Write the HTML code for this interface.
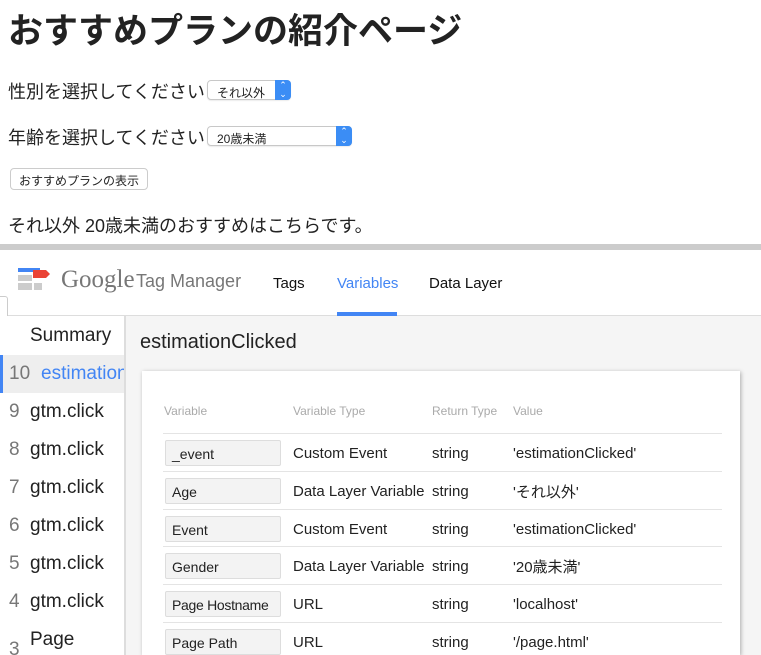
<!DOCTYPE html>
<html style="overflow:hidden;width:761px;height:655px"><head><meta charset="utf-8"><style>
*{margin:0;padding:0;box-sizing:border-box}
body{width:761px;height:655px;overflow:hidden;background:#fff;font-family:"Liberation Sans","Noto Sans CJK JP",sans-serif;position:relative;color:#222}
.a{position:absolute;white-space:nowrap}
.sel{position:absolute;height:20px;border:1px solid #c8c8c8;border-radius:4px;background:#fff;font-size:12px;padding:3px 9px;box-shadow:0 1px 1px rgba(0,0,0,.08);white-space:nowrap}
.sel i{position:absolute;right:-1px;top:-1px;width:16px;height:20px;background:#3b8df5;border-radius:0 4px 4px 0;color:#fff;font-style:normal;font-size:9px;text-align:center;line-height:9px;padding-top:1px}
.side{position:absolute;left:0;top:316px;width:126px;height:339px;border-right:2px solid #ddd;background:#fff;overflow:hidden}
.it{position:absolute;left:0;width:124px;height:38px;font-size:19px;line-height:38px;white-space:nowrap;overflow:hidden}
.it b{font-weight:normal;color:#777;display:inline-block;width:30px;padding-left:9px}
.row{position:absolute;left:163px;width:559px;height:38px;border-top:1px solid #e4e4e4;font-size:15px;white-space:nowrap}
.row span{position:absolute;top:11px}
.box{position:absolute;left:2px;top:6px;width:116px;height:26px;background:#f3f3f3;border:1px solid #ddd;border-radius:2px;padding:5px 6px;font-size:14px;white-space:nowrap;overflow:hidden}
</style></head><body>
<div class="a" style="left:8px;top:3px;font-size:35px;font-weight:bold">おすすめプランの紹介ページ</div>
<div class="a" style="left:8px;top:78px;font-size:18px">性別を選択してください</div>
<div class="sel" style="left:207px;top:80px;width:84px">それ以外<i>⌃<br>⌄</i></div>
<div class="a" style="left:8px;top:124px;font-size:18px">年齢を選択してください</div>
<div class="sel" style="left:207px;top:126px;width:145px">20歳未満<i>⌃<br>⌄</i></div>
<div class="a" style="left:10px;top:168px;width:138px;height:22px;border:1px solid #ccc;border-radius:4px;font-size:12px;padding:3px 8px;background:#fff">おすすめプランの表示</div>
<div class="a" style="left:8px;top:212px;font-size:18px">それ以外 20歳未満のおすすめはこちらです。</div>
<div class="a" style="left:0;top:244px;width:761px;height:6px;background:#ccc"></div>
<div class="a" style="left:0;top:250px;width:761px;height:66px;background:#fff;border-bottom:1px solid #ddd"></div>
<svg class="a" style="left:17px;top:266px" width="34" height="26"><rect x="1" y="2" width="22" height="4" fill="#4285f4"/><rect x="1" y="9" width="14" height="6" fill="#ccc"/><rect x="1" y="17" width="14" height="7" fill="#ccc"/><rect x="17" y="17" width="8" height="7" fill="#ccc"/><path d="M16 4h13l4 4-4 4H16z" fill="#ea4335"/></svg>
<div class="a" style="left:61px;top:266px;font-family:'Liberation Serif',serif;font-size:25px;color:#777">Google</div>
<div class="a" style="left:136px;top:271px;font-size:18px;color:#777">Tag Manager</div>
<div class="a" style="left:273px;top:275px;font-size:15px;color:#111">Tags</div>
<div class="a" style="left:337px;top:275px;font-size:15px;color:#4285f4">Variables</div>
<div class="a" style="left:337px;top:312px;width:60px;height:4px;background:#4285f4"></div>
<div class="a" style="left:429px;top:275px;font-size:15px;color:#111">Data Layer</div>
<div class="a" style="left:-4px;top:296px;width:12px;height:26px;border:1px solid #ccc;border-radius:3px;background:#fff"></div>
<div class="a" style="left:126px;top:316px;width:635px;height:339px;background:#f5f5f5"></div>
<div class="side">
<div class="it" style="top:1px;padding-left:30px">Summary</div>
<div class="it" style="top:39px;background:#eee;border-left:3px solid #4285f4;color:#4285f4"><b style="padding-left:6px">10</b><span style="position:absolute;left:38px">estimationClicked</span></div>
<div class="it" style="top:77px"><b>9</b>gtm.click</div>
<div class="it" style="top:115px"><b>8</b>gtm.click</div>
<div class="it" style="top:153px"><b>7</b>gtm.click</div>
<div class="it" style="top:191px"><b>6</b>gtm.click</div>
<div class="it" style="top:229px"><b>5</b>gtm.click</div>
<div class="it" style="top:267px"><b>4</b>gtm.click</div>
<div class="it" style="top:305px"><b style="position:relative;top:10px">3</b>Page</div>
</div>
<div class="a" style="left:140px;top:331px;font-size:20px;color:#222">estimationClicked</div>
<div class="a" style="left:142px;top:371px;width:598px;height:284px;background:#fff;box-shadow:1px 1px 4px rgba(0,0,0,.3)"></div>
<div class="a" style="left:164px;top:404px;font-size:12px;color:#aaa">Variable</div>
<div class="a" style="left:293px;top:404px;font-size:12px;color:#aaa">Variable Type</div>
<div class="a" style="left:432px;top:404px;font-size:12px;color:#aaa">Return Type</div>
<div class="a" style="left:513px;top:404px;font-size:12px;color:#aaa">Value</div>
<div class="row" style="top:433px"><div class="box">_event</div><span style="left:130px">Custom Event</span><span style="left:269px">string</span><span style="left:350px">'estimationClicked'</span></div>
<div class="row" style="top:471px"><div class="box">Age</div><span style="left:130px">Data Layer Variable</span><span style="left:269px">string</span><span style="left:350px;top:9px">'それ以外'</span></div>
<div class="row" style="top:509px"><div class="box">Event</div><span style="left:130px">Custom Event</span><span style="left:269px">string</span><span style="left:350px">'estimationClicked'</span></div>
<div class="row" style="top:546px"><div class="box">Gender</div><span style="left:130px">Data Layer Variable</span><span style="left:269px">string</span><span style="left:350px;top:9px">'20歳未満'</span></div>
<div class="row" style="top:584px"><div class="box" style="letter-spacing:-.3px">Page Hostname</div><span style="left:130px">URL</span><span style="left:269px">string</span><span style="left:350px">'localhost'</span></div>
<div class="row" style="top:622px"><div class="box">Page Path</div><span style="left:130px">URL</span><span style="left:269px">string</span><span style="left:350px">'/page.html'</span></div>
</body></html>
